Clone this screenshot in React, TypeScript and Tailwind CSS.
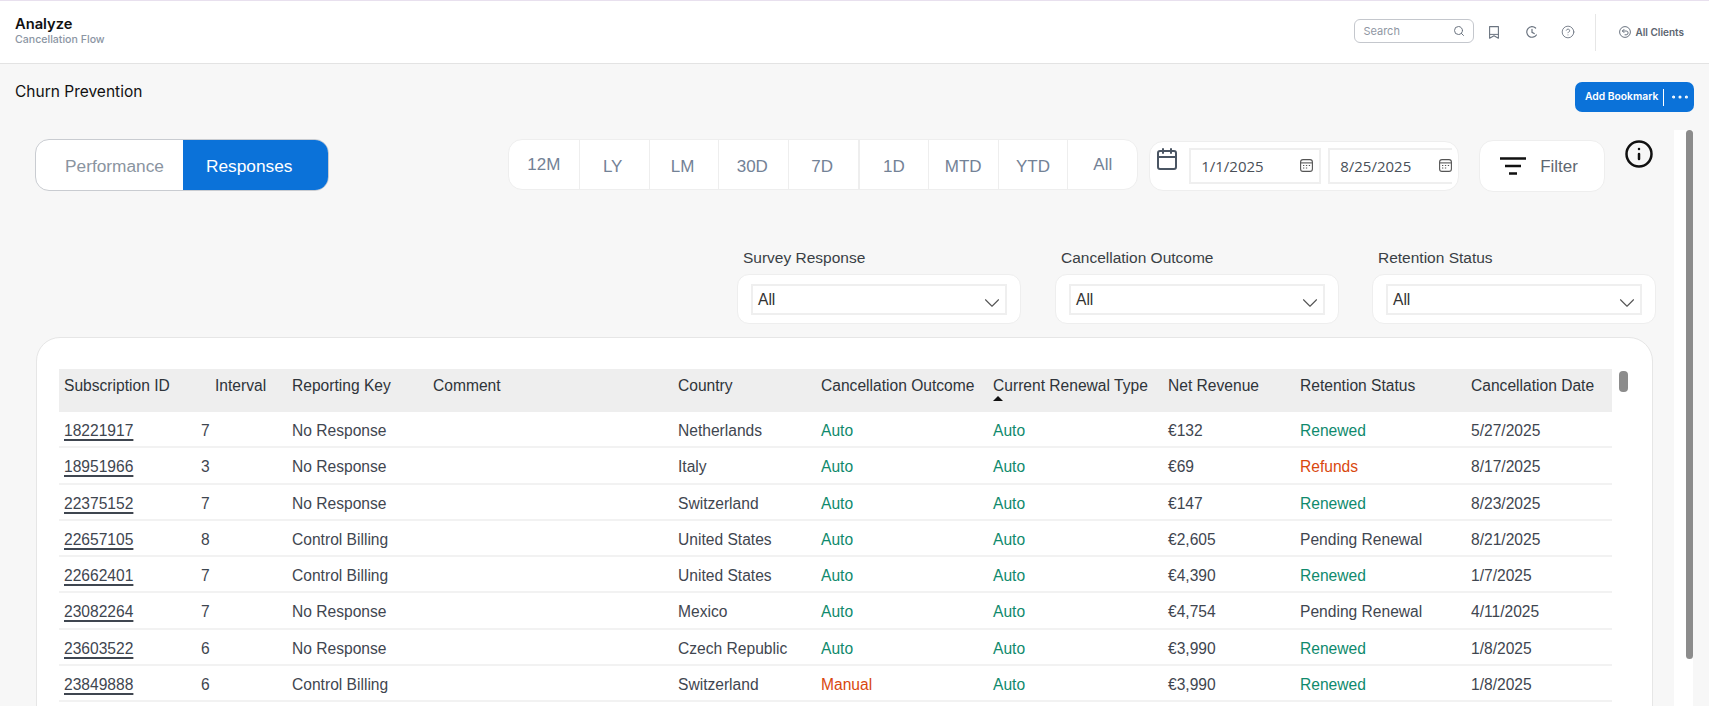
import { Search, CircleHelp, Calendar, ChevronDown, Info, Ellipsis } from 'lucide-react';

const ranges = ['12M', 'LY', 'LM', '30D', '7D', '1D', 'MTD', 'YTD', 'All'];

const columns = [
    { label: 'Subscription ID', width: 'w-[137px]', pad: 'pl-[5px]' },
    { label: 'Interval', width: 'w-[91px]', pad: 'pl-[19px]' },
    { label: 'Reporting Key', width: 'w-[141px]', pad: 'pl-[5px]' },
    { label: 'Comment', width: 'w-[245px]', pad: 'pl-[5px]' },
    { label: 'Country', width: 'w-[143px]', pad: 'pl-[5px]' },
    { label: 'Cancellation Outcome', width: 'w-[172px]', pad: 'pl-[5px]' },
    { label: 'Current Renewal Type', width: 'w-[175px]', pad: 'pl-[5px]' },
    { label: 'Net Revenue', width: 'w-[132px]', pad: 'pl-[5px]' },
    { label: 'Retention Status', width: 'w-[171px]', pad: 'pl-[5px]' },
    { label: 'Cancellation Date', width: 'w-[146px]', pad: 'pl-[5px]' },
];

const rows = [
    ['18221917', '7', 'No Response', 'Netherlands', 'Auto', 'Auto', '€132', 'Renewed', '5/27/2025'],
    ['18951966', '3', 'No Response', 'Italy', 'Auto', 'Auto', '€69', 'Refunds', '8/17/2025'],
    ['22375152', '7', 'No Response', 'Switzerland', 'Auto', 'Auto', '€147', 'Renewed', '8/23/2025'],
    ['22657105', '8', 'Control Billing', 'United States', 'Auto', 'Auto', '€2,605', 'Pending Renewal', '8/21/2025'],
    ['22662401', '7', 'Control Billing', 'United States', 'Auto', 'Auto', '€4,390', 'Renewed', '1/7/2025'],
    ['23082264', '7', 'No Response', 'Mexico', 'Auto', 'Auto', '€4,754', 'Pending Renewal', '4/11/2025'],
    ['23603522', '6', 'No Response', 'Czech Republic', 'Auto', 'Auto', '€3,990', 'Renewed', '1/8/2025'],
    ['23849888', '6', 'Control Billing', 'Switzerland', 'Manual', 'Auto', '€3,990', 'Renewed', '1/8/2025'],
];

function statusColor(value: string) {
    if (value === 'Auto' || value === 'Renewed') return 'text-[#0f8a6d]';
    if (value === 'Manual' || value === 'Refunds') return 'text-[#d9480f]';
    return 'text-[#3f4650]';
}

function Slicer({ label, gap }: { label: string; gap: string }) {
    return (
        <div className={`w-[284px] ${gap} shrink-0`}>
            <div className="text-[15.5px] leading-[20px] text-[#3a3f45] pl-[6px]">{label}</div>
            <div className="mt-[6px] h-[50px] rounded-[12px] border border-[#eeeeee] bg-white px-[13px] pt-[9px]">
                <div className="h-[31px] border-2 border-[#efefef] flex items-center justify-between pl-[5px] text-[15.6px] text-[#333]">
                    <span className="pt-[1px]">All</span>
                    <ChevronDown className="w-[26px] h-[26px] text-[#555] mt-[6px]" strokeWidth={1} />
                </div>
            </div>
        </div>
    );
}

function SmallCalendar() {
    return (
        <svg width="13" height="13" viewBox="0 0 13 13" fill="none" className="text-[#555] shrink-0 -mt-[2px]">
            <rect x="0.6" y="0.6" width="11.8" height="11.8" rx="2.4" stroke="currentColor" strokeWidth="1.1" />
            <path d="M0.6 3.9h11.8" stroke="currentColor" strokeWidth="1.1" />
            <path d="M3 6.5h1.3M5.9 6.5h1.3M8.8 6.5h1.3M3 9h1.3M5.9 9h1.3" stroke="currentColor" strokeWidth="1.1" />
        </svg>
    );
}

function BookmarkIcon() {
    return (
        <svg width="10" height="13" viewBox="0 0 10 13" fill="none" className="text-[#6b7480] ml-[15px]">
            <path d="M0.6 0.6h8.8v11.6L5 9.8l-4.4 2.4z" stroke="currentColor" strokeWidth="1.1" strokeLinejoin="round" />
            <path d="M0.6 8.4h8.8" stroke="currentColor" strokeWidth="1" />
        </svg>
    );
}

function ClockIcon() {
    return (
        <svg width="12" height="12" viewBox="0 0 12 12" fill="none" className="text-[#6b7480] ml-[27px]">
            <path d="M9.6 2A5.3 5.3 0 1 0 10.4 9" stroke="currentColor" strokeWidth="1.2" strokeLinecap="round" />
            <path d="M6 3.3v3l2.2 1.3" stroke="currentColor" strokeWidth="1.2" strokeLinecap="round" />
        </svg>
    );
}

function ClientsIcon() {
    return (
        <svg width="12" height="12" viewBox="0 0 12 12" fill="none" className="text-[#6b7480] ml-[23px]">
            <circle cx="6" cy="6" r="5.4" stroke="currentColor" strokeWidth="1" />
            <path d="M3.4 5h3.8a1.9 1.9 0 0 1 0 3.8H6M5 3.4L3.4 5 5 6.6" stroke="currentColor" strokeWidth="1" strokeLinecap="round" strokeLinejoin="round" />
        </svg>
    );
}

export default function App() {
    return (
        <div className="w-[1709px] h-[706px] overflow-hidden bg-[#f7f7f7] font-['Liberation_Sans',sans-serif]">
            {/* Top bar */}
            <header className="h-[64px] bg-white border-t border-t-[#e8e0ee] border-b border-b-[#e3e3e3] flex items-center justify-between pl-[15px] pr-[25px] font-['Inter',sans-serif]">
                <div className="-mt-[2px]">
                    <div className="text-[14.7px] leading-[18px] font-semibold text-[#111]">Analyze</div>
                    <div className="text-[10.6px] leading-[14px] font-medium text-[#8b95a3]">Cancellation Flow</div>
                </div>
                <div className="flex items-center">
                    <div className="w-[120px] h-[24px] -mt-[2px] rounded-[6px] border border-[#c4c7cd] flex items-center justify-between pl-[8px] pr-[8px]">
                        <span className="text-[11px] text-[#8f97a3]">Search</span>
                        <Search className="w-[12px] h-[12px] text-[#6b7480]" />
                    </div>
                    <BookmarkIcon />
                    <ClockIcon />
                    <CircleHelp className="ml-[23px] w-[14px] h-[14px] text-[#6b7480]" strokeWidth={1.5} />
                    <div className="ml-[20px] w-px h-[37px] bg-[#e6e6e6]" />
                    <ClientsIcon />
                    <span className="ml-[4px] text-[10px] font-semibold text-[#5c6570]">All Clients</span>
                </div>
            </header>

            {/* Page title row */}
            <div className="h-[55px] flex justify-between pl-[15px] pr-[15px] font-['Inter',sans-serif]">
                <div className="pt-[19px] text-[15.5px] leading-[18px] text-[#111]">Churn Prevention</div>
                <div className="mt-[18px] h-[30px] w-[119px] rounded-[7px] bg-[#0b72d9] flex items-center pl-[10px] text-white">
                    <span className="text-[10.3px] font-semibold whitespace-nowrap">Add Bookmark</span>
                    <span className="ml-[5px] w-px h-[17px] bg-white shrink-0" />
                    <Ellipsis className="ml-[5px] w-[22px] h-[22px] shrink-0" strokeWidth={1.4} />
                </div>
            </div>

            <div className="flex">
                {/* Report canvas */}
                <main className="w-[1674px] shrink-0 pl-[35px] pt-[20px]">
                    <div className="flex items-start h-[52px]">
                        <div className="flex h-[52px] w-[294px] rounded-[14px] overflow-hidden border border-[#c9ccd1] bg-white text-[17.3px]">
                            <div className="w-[147px] flex items-center pl-[29px] pt-[3px] text-[#8a94a0]">Performance</div>
                            <div className="flex-1 -my-px bg-[#0b72d9] text-white flex items-center pl-[23px] pt-[3px]">Responses</div>
                        </div>

                        <div className="ml-[179px] flex h-[51px] rounded-[14px] border border-[#eeeeee] bg-white text-[17px] text-[#738296]">
                            {ranges.map((range, i) => (
                                <div
                                    key={range}
                                    className={`w-[69.8px] flex items-center justify-center ${i === 5 ? 'border-l-2 border-[#eeeeee]' : i > 0 ? 'border-l border-[#eeeeee]' : ''} ${i === 0 || i === 8 ? 'pt-[1px]' : 'pt-[4px]'} ${i >= 1 && i <= 4 ? 'pr-[3px]' : ''}`}
                                >
                                    {range}
                                </div>
                            ))}
                        </div>

                        <div className="ml-[11px] mt-[2px] w-[310px] h-[50px] rounded-[14px] border border-[#eeeeee] bg-white flex items-start pl-[5px] pt-[5px] font-['Open_Sans',sans-serif]">
                            <Calendar className="w-[24px] h-[24px] text-[#4a5563] shrink-0" strokeWidth={2} />
                            <div className="ml-[10px] mt-[1px] flex gap-[7px]">
                                <div className="w-[132px] h-[36px] border-2 border-[#efefef] flex items-center justify-between pl-[10px] pr-[6px] text-[15px] text-[#4a5058]">
                                    <span>1/1/2025</span>
                                    <SmallCalendar />
                                </div>
                                <div className="w-[124px] h-[36px] border-2 border-r-0 border-[#efefef] flex items-center justify-between pl-[10px] text-[15px] text-[#4a5058]">
                                    <span>8/25/2025</span>
                                    <SmallCalendar />
                                </div>
                            </div>
                        </div>

                        <div className="ml-[20px] mt-[1px] w-[126px] h-[52px] rounded-[14px] border border-[#eeeeee] bg-white flex items-center pl-[20px] text-[17px] text-[#5f6771]">
                            <svg width="26" height="18" viewBox="0 0 26 18" className="text-[#111] shrink-0">
                                <path d="M0 1.5h26M5 9h16M9 16.5h8" stroke="currentColor" strokeWidth="2.6" fill="none" />
                            </svg>
                            <span className="ml-[14px] pt-[2px]">Filter</span>
                        </div>

                        <Info className="ml-[19px] w-[30px] h-[30px] text-[#111]" strokeWidth={2} />
                    </div>

                    <div className="mt-[57px] ml-[702px] flex">
                        <Slicer label="Survey Response" gap="mr-[34px]" />
                        <Slicer label="Cancellation Outcome" gap="mr-[33px]" />
                        <Slicer label="Retention Status" gap="" />
                    </div>

                    {/* Table card */}
                    <div className="mt-[13px] ml-[1px] w-[1617px] h-[400px] rounded-t-[24px] border border-[#e6e6e6] bg-white pl-[22px] pt-[31px] relative">
                        <div className="w-[1553px]">
                            <div className="flex h-[43px] bg-[#eeeeee] text-[15.6px] leading-[18px] text-[#2f343a]">
                                {columns.map((col) => (
                                    <div key={col.label} className={`${col.width} ${col.pad} shrink-0 pt-[8px] whitespace-nowrap relative`}>
                                        {col.label}
                                        {col.label === 'Current Renewal Type' && (
                                            <span className="absolute left-[5px] top-[27px] w-0 h-0 border-x-[5px] border-x-transparent border-b-[5px] border-b-[#111]" />
                                        )}
                                    </div>
                                ))}
                            </div>
                            {rows.map((row) => (
                                <div key={row[0]} className="flex h-[36.3px] items-center pt-[3px] border-b-2 border-[#f2f2f2] text-[15.6px] text-[#3f4650]">
                                    <div className="w-[137px] pl-[5px] shrink-0 underline decoration-[2px] underline-offset-[3px]">{row[0]}</div>
                                    <div className="w-[91px] pl-[5px] shrink-0">{row[1]}</div>
                                    <div className="w-[141px] pl-[5px] shrink-0">{row[2]}</div>
                                    <div className="w-[245px] shrink-0" />
                                    <div className="w-[143px] pl-[5px] shrink-0 whitespace-nowrap">{row[3]}</div>
                                    <div className={`w-[172px] pl-[5px] shrink-0 ${statusColor(row[4])}`}>{row[4]}</div>
                                    <div className={`w-[175px] pl-[5px] shrink-0 ${statusColor(row[5])}`}>{row[5]}</div>
                                    <div className="w-[132px] pl-[5px] shrink-0">{row[6]}</div>
                                    <div className={`w-[171px] pl-[5px] shrink-0 ${statusColor(row[7])}`}>{row[7]}</div>
                                    <div className="w-[146px] pl-[5px] shrink-0">{row[8]}</div>
                                </div>
                            ))}
                        </div>
                        {/* table scrollbar */}
                        <div className="absolute left-[1582px] top-[33px] w-[9px] h-[21px] rounded-[4px] bg-[#8c8c8c]" />
                    </div>
                </main>

                {/* Page scrollbar */}
                <div className="w-[19px] h-[600px] mt-[11px] shrink-0 bg-white pl-[12px]">
                    <div className="w-[7px] h-[529px] rounded-[4px] bg-[#8c8c8c]" />
                </div>
            </div>
        </div>
    );
}
